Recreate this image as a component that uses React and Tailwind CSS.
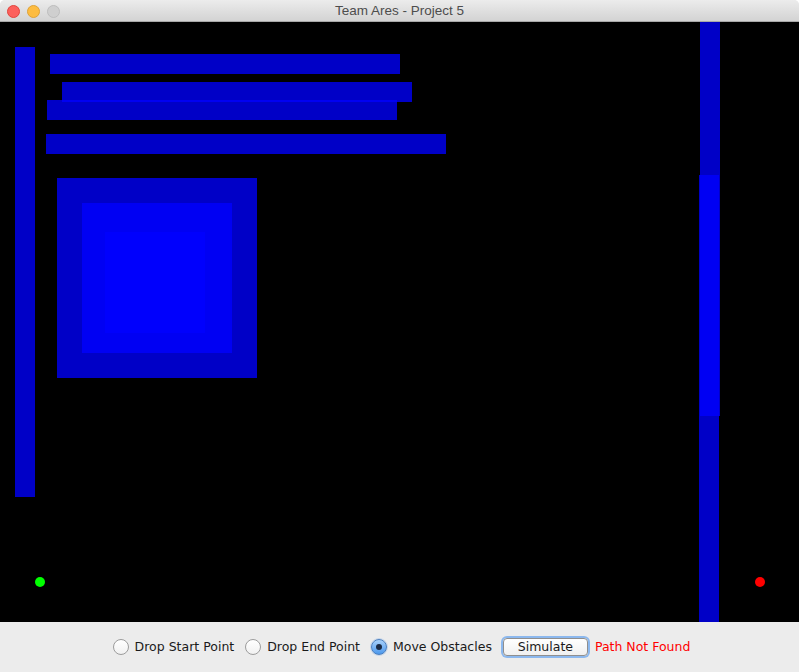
import React, { useState } from 'react';

// obstacles on the canvas (canvas coords, px)
const obstacles = [
  { x: 15, y: 25, w: 20, h: 450 },
  { x: 50, y: 32, w: 350, h: 20 },
  { x: 62, y: 60, w: 350, h: 20 },
  { x: 47, y: 78, w: 350, h: 20 },
  { x: 46, y: 112, w: 400, h: 20 },
  { x: 57, y: 156, w: 200, h: 200 },
  { x: 82, y: 181, w: 150, h: 150 },
  { x: 105, y: 210, w: 100, h: 101 },
  { x: 700, y: -6, w: 20, h: 400 },
  { x: 699, y: 153, w: 20, h: 447 },
];

const Radio = ({ checked, label, onClick }) => (
  <button type="button" onClick={onClick} className="flex items-center gap-[6px]">
    {checked ? (
      <span className="w-[16px] h-[16px] rounded-full border border-[#4a7fc0] bg-gradient-to-b from-[#a9d1fa] to-[#4b98ec] flex items-center justify-center shadow-[0_0_0_1px_rgba(120,170,230,0.35)]">
        <span className="w-[6px] h-[6px] rounded-full bg-[#1b2a44]"></span>
      </span>
    ) : (
      <span className="w-[16px] h-[16px] rounded-full border border-[#9c9c9c] bg-gradient-to-b from-[#ffffff] to-[#f1f1f1]"></span>
    )}
    <span className="text-[12.5px] text-[#1a1a1a] leading-none">{label}</span>
  </button>
);

const App = () => {
  const [mode, setMode] = useState('move');

  return (
    <div
      className="w-[799px] h-[672px] flex flex-col bg-[#ececec] overflow-hidden rounded-t-[5px]"
      style={{ fontFamily: '"DejaVu Sans", "Liberation Sans", sans-serif' }}
    >
      {/* title bar */}
      <div className="relative h-[22px] shrink-0 bg-gradient-to-b from-[#ececec] to-[#d3d3d3] border-b border-[#a8a8a8] flex items-center justify-center">
        <div className="absolute left-[7px] top-[5px] flex gap-[7px]">
          <span className="w-[13px] h-[13px] rounded-full bg-[#fc605c] border border-[#e0443e]"></span>
          <span className="w-[13px] h-[13px] rounded-full bg-[#fdbc40] border border-[#dea236]"></span>
          <span className="w-[13px] h-[13px] rounded-full bg-[#cfcfcf] border border-[#bdbdbd]"></span>
        </div>
        <span
          className="text-[13.5px] text-[#4d4d4d] leading-none"
          style={{ fontFamily: '"Liberation Sans", Arial, sans-serif' }}
        >
          Team Ares - Project 5
        </span>
      </div>

      {/* canvas */}
      <div className="relative h-[600px] shrink-0 bg-black overflow-hidden">
        {obstacles.map((o, i) => (
          <div
            key={i}
            className="absolute bg-[rgba(0,0,255,0.78)]"
            style={{ left: o.x, top: o.y, width: o.w, height: o.h }}
          ></div>
        ))}
        <div className="absolute left-[35px] top-[555px] w-[10px] h-[10px] rounded-full bg-[#00ff00]"></div>
        <div className="absolute left-[755px] top-[555px] w-[10px] h-[10px] rounded-full bg-[#ff0000]"></div>
      </div>

      {/* controls */}
      <div className="flex-1 flex items-center justify-center pl-[4px]">
        <Radio label="Drop Start Point" checked={mode === 'start'} onClick={() => setMode('start')} />
        <div className="w-[11px]"></div>
        <Radio label="Drop End Point" checked={mode === 'end'} onClick={() => setMode('end')} />
        <div className="w-[11px]"></div>
        <Radio label="Move Obstacles" checked={mode === 'move'} onClick={() => setMode('move')} />
        <button
          type="button"
          className="ml-[11px] w-[85px] h-[18px] rounded-[4px] border border-[#8f8f8f] bg-gradient-to-b from-[#ffffff] to-[#f0f0f0] shadow-[0_0_0_2px_#8cb8ee] text-[12.5px] text-[#1a1a1a] leading-none flex items-center justify-center"
        >
          Simulate
        </button>
        <span className="ml-[7px] text-[12.5px] text-[#ff0000] leading-none">Path Not Found</span>
      </div>
    </div>
  );
};

export default App;
